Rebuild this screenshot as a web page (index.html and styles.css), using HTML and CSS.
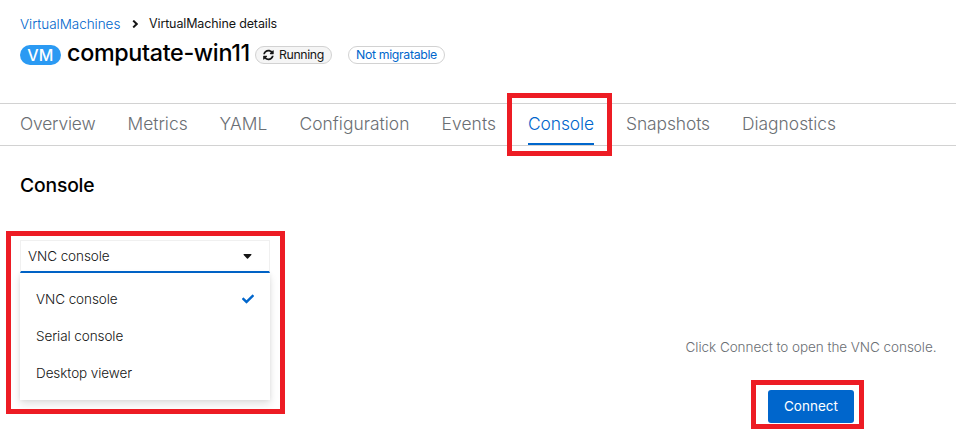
FILE: index.html
```
<!DOCTYPE html>
<html lang="en">
<head>
<meta charset="utf-8">
<title>computate-win11</title>
<link rel="stylesheet" href="styles.css">
</head>
<body>
<header class="header">
  <nav class="breadcrumb">
    <a class="crumb-link">VirtualMachines</a>
    <svg class="chevron" viewBox="0 0 6 8"><path d="M1.2 .6 4.7 4 1.2 7.4" fill="none" stroke="#151515" stroke-width="2"/></svg>
    <span class="crumb-current">VirtualMachine details</span>
  </nav>
  <div class="title-row">
    <span class="badge">VM</span>
    <h1 class="title">computate-win11</h1>
    <span class="label running">
      <svg class="sync" viewBox="0 0 512 512"><path fill="#151515" d="M370.72 133.28C339.458 104.008 298.888 87.962 255.848 88c-77.458.068-144.328 53.178-162.791 126.85-1.344 5.363-6.122 9.15-11.651 9.15H24.103c-7.498 0-13.194-6.807-11.807-14.176C33.933 94.924 134.813 8 256 8c66.448 0 126.791 26.136 171.315 68.685L463.03 40.97C478.149 25.851 504 36.559 504 57.941V192c0 13.255-10.745 24-24 24H345.941c-21.382 0-32.09-25.851-16.971-40.971l41.75-41.749zM32 296h134.059c21.382 0 32.09 25.851 16.971 40.971l-41.75 41.75c31.262 29.273 71.835 45.319 114.876 45.28 77.418-.07 144.315-53.144 162.787-126.849 1.344-5.363 6.122-9.15 11.651-9.15h57.304c7.498 0 13.194 6.807 11.807 14.176C478.067 417.076 377.187 504 256 504c-66.448 0-126.791-26.136-171.315-68.685L48.97 471.03C33.851 486.149 8 475.441 8 454.059V320c0-13.255 10.745-24 24-24z"/></svg>
      <span>Running</span>
    </span>
    <span class="label migratable">Not migratable</span>
  </div>
</header>
<nav class="tabs">
  <a class="tab overview">Overview</a>
  <a class="tab metrics">Metrics</a>
  <a class="tab yaml">YAML</a>
  <a class="tab configuration">Configuration</a>
  <a class="tab events">Events</a>
  <a class="tab console">Console<span class="mark mark-tab"></span></a>
  <a class="tab snapshots">Snapshots</a>
  <a class="tab diagnostics">Diagnostics</a>
</nav>
<main class="main">
  <h2 class="heading">Console</h2>
  <div class="content">
    <div class="select">
      <div class="toggle"><span>VNC console</span>
        <svg class="caret" viewBox="0 0 8 5"><path d="M.5 0h7q.8.2.3.9L4.5 4.6q-.5.5-1 0L.2.9Q-.3.2.5 0z" fill="#151515"/></svg>
      </div>
      <ul class="menu">
        <li class="option"><span>VNC console</span>
          <svg class="check" viewBox="0 0 512 512"><path fill="#06c" d="M173.898 439.404l-166.4-166.4c-9.997-9.997-9.997-26.206 0-36.204l36.203-36.204c9.997-9.998 26.207-9.998 36.204 0L192 312.69 432.095 72.596c9.997-9.997 26.207-9.997 36.204 0l36.203 36.204c9.997 9.997 9.997 26.206 0 36.204l-294.4 294.401c-9.998 9.997-26.207 9.997-36.204-.001z"/></svg>
        </li>
        <li class="option">Serial console</li>
        <li class="option">Desktop viewer</li>
      </ul>
      <span class="mark mark-select"></span>
    </div>
    <div class="empty">
      <p class="hint">Click Connect to open the VNC console.</p>
      <button class="connect">Connect<span class="mark mark-connect"></span></button>
    </div>
  </div>
</main>
</body>
</html>
```
FILE: styles.css
```
* { box-sizing: border-box; }
html, body { height: 100%; overflow: hidden; }
body {
  margin: 0;
  background: #fff;
  color: #151515;
  font: 300 13.5px/21px Inter, "Liberation Sans", sans-serif;
  letter-spacing: -.08px;
  white-space: nowrap;
}
h1, h2, p, ul { margin: 0; padding: 0; }

.header { height: 103px; padding: 13px 20px 0; }
.breadcrumb { display: flex; height: 22px; }
.crumb-link { width: 100px; padding-top: 1px; color: #06c; letter-spacing: -.03px; }
.chevron { width: 6px; height: 8px; margin: 7px 11px 0 12px; }
.crumb-current { font-size: 12.5px; font-weight: 400; letter-spacing: -.13px; }

.title-row { display: flex; height: 36px; }
.badge {
  width: 41px;
  height: 20px;
  margin-top: 10px;
  border-radius: 10px;
  background: #2b9af3;
  color: #fff;
  font-size: 16px;
  font-weight: 500;
  letter-spacing: .2px;
  line-height: 21px;
  text-align: center;
}
.title {
  width: 187px;
  padding-left: 6px;
  color: #000;
  font-size: 23.3px;
  font-weight: 500;
  letter-spacing: -.32px;
  line-height: 36px;
}
.label {
  display: flex;
  align-items: center;
  height: 18px;
  margin-top: 11px;
  padding: 0 7px;
  border: 1px solid #d2d2d2;
  border-radius: 9px;
  font-size: 12.3px;
  font-weight: 400;
  letter-spacing: -.34px;
  line-height: 16px;
}
.running { width: 77px; margin-left: 7px; background: #f5f5f5; gap: 5px; }
.sync { width: 12px; height: 12px; }
.migratable { width: 97px; margin-left: 16px; color: #06c; }

.tabs {
  display: flex;
  gap: 32px;
  height: 43px;
  padding: 0 20px;
  border: solid #d2d2d2;
  border-width: 1px 0;
}
.tab {
  position: relative;
  flex: none;
  height: 41px;
  color: #6a6e73;
  font-size: 17.4px;
  font-weight: 300;
  line-height: 40px;
}
.overview { width: 75.5px; letter-spacing: -.17px; }
.metrics { width: 60px; letter-spacing: 0; }
.yaml { width: 48px; letter-spacing: .1px; }
.configuration { width: 110px; letter-spacing: .03px; }
.events { width: 54.5px; letter-spacing: .1px; }
.console { width: 66px; border-bottom: 2px solid #06c; color: #06c; letter-spacing: -.1px; }
.snapshots { width: 84px; letter-spacing: -.09px; }
.diagnostics { width: 94px; letter-spacing: 0; }

/* red callout frames */
.mark { position: absolute; border: 5px solid #ed1c24; pointer-events: none; }
.mark-tab { inset: -11px -18px -13px -21px; }
.mark-select { inset: -9px -15px -14px -14px; }
.mark-connect { inset: -10px -10px -6px -17px; }

.main { padding: 24px 0 0 20px; }
.heading {
  height: 30px;
  color: #000;
  font-size: 19.3px;
  font-weight: 500;
  letter-spacing: -.16px;
  line-height: 30px;
}
.content { display: flex; align-items: flex-start; padding-top: 40px; }
.select { position: relative; width: 250px; }
.toggle {
  display: flex;
  justify-content: space-between;
  align-items: center;
  height: 33px;
  padding: 0 17px 0 7px;
  border: 1px solid #f0f0f0;
  border-bottom: 2px solid #06c;
}
.caret { width: 9px; height: 5px; }
.menu {
  height: 127px;
  padding: 8px 0;
  list-style: none;
  box-shadow: 0 4px 8px rgba(3, 3, 3, .12), 0 0 4px rgba(3, 3, 3, .06);
}
.option {
  display: flex;
  justify-content: space-between;
  align-items: center;
  height: 37px;
  padding: 0 16px;
}
.check { width: 12px; height: 12px; margin-top: -2px; }

.empty {
  display: flex;
  flex-direction: column;
  align-items: center;
  width: 252px;
  margin-left: 415px;
  padding-top: 97px;
}
.hint { height: 53px; color: #6a6e73; letter-spacing: -.05px; }
.connect {
  position: relative;
  width: 86px;
  height: 33px;
  padding: 0;
  border: 0;
  border-radius: 3px;
  background: #06c;
  color: #fff;
  font: inherit;
  font-weight: 400;
  letter-spacing: .02px;
}
```
